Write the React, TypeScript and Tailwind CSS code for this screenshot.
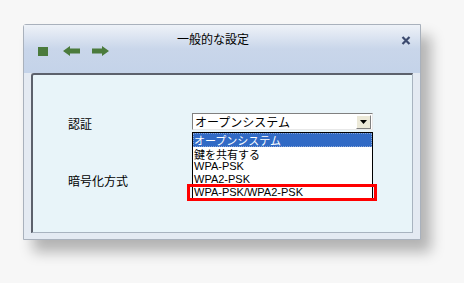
import React from 'react';

const jp = { fontFamily: '"Noto Sans CJK JP", "DejaVu Sans", sans-serif' };
const latin = { fontFamily: '"Liberation Sans", "Noto Sans CJK JP", sans-serif' };

const options = ['オープンシステム', '鍵を共有する', 'WPA-PSK', 'WPA2-PSK', 'WPA-PSK/WPA2-PSK'];
const rowH = ['h-[14px]', 'h-[13px]', 'h-[12px]', 'h-[13px]', 'h-[13px]'];

const ArrowIcon = ({ dir }: { dir: 'left' | 'right' }) => (
  <svg width="17" height="10" viewBox="0 0 17 10">
    {dir === 'left' ? (
      <polygon points="0,5 7,0 7,2.5 17,2.5 17,7.5 7,7.5 7,10" fill="#4b7b3c" />
    ) : (
      <polygon points="17,5 10,0 10,2.5 0,2.5 0,7.5 10,7.5 10,10" fill="#4b7b3c" />
    )}
  </svg>
);

const App = () => {
  return (
    <div className="w-[464px] h-[283px] bg-[#f7f7f7] pl-[23px] pt-[24px] overflow-hidden">
      <div className="w-[398px] h-[216px] flex flex-col bg-[#e4eaf2] border border-[#a9b1bc] rounded-tl-[3px] shadow-[10px_12px_14px_rgba(0,0,0,0.28)]">
        {/* header */}
        <div className="h-[48px] flex items-start bg-gradient-to-b from-[#eef2f8] via-[#c9d6ea] to-[#c4d3e9]">
          <div className="flex items-center mt-[21px] ml-[14px]">
            <div className="w-[10px] h-[9px] bg-[#4b7b3c]" />
            <div className="ml-[15px]"><ArrowIcon dir="left" /></div>
            <div className="ml-[12px]"><ArrowIcon dir="right" /></div>
          </div>
          <div className="ml-[68px] mt-[7px] text-[12px] leading-[14px] text-black" style={jp}>
            一般的な設定
          </div>
          <div className="ml-auto mr-[9px] mt-[11px]">
            <svg width="10" height="9" viewBox="0 0 10 9">
              <path d="M1.5 1 L8.5 8 M8.5 1 L1.5 8" stroke="#3c4a6e" strokeWidth="2.2" />
            </svg>
          </div>
        </div>

        {/* panel */}
        <div className="mx-[7px] h-[160px] bg-[#e8f4f9] border-t-2 border-l-2 border-t-[#5c616c] border-l-[#5c616c] border-r border-b border-r-[#a8b3bf] border-b-[#a8b3bf] rounded-tl-[3px] flex pt-[38px] pl-[35px]">
          <div className="w-[124px] flex flex-col text-[12px] text-black" style={jp}>
            <div className="leading-[17px] mt-[2px]">認証</div>
            <div className="leading-[17px] mt-[40px]">暗号化方式</div>
          </div>
          <div className="w-[181px] flex flex-col">
            <div className="h-[17px] flex items-center bg-white border-t border-l border-t-[#808080] border-l-[#808080] border-r border-b border-r-[#e8e8e8] border-b-[#e8e8e8] pl-[2px] pr-[1px]">
              <span className="text-[12px] leading-[14px] text-black" style={jp}>オープンシステム</span>
              <div className="ml-auto w-[15px] h-[14px] bg-[#ece9d8] border border-t-white border-l-white border-r-[#808080] border-b-[#808080] flex items-center justify-center">
                <svg width="7" height="4" viewBox="0 0 7 4">
                  <polygon points="0,0 7,0 3.5,4" fill="#000" />
                </svg>
              </div>
            </div>
            <div className="relative mt-[2px] bg-white border border-black">
              {options.map((o, i) => (
                <div
                  key={o}
                  className={
                    (i === 0
                      ? 'bg-[#316ac5] text-white outline-1 outline-dotted outline-[#8aa6d6] -outline-offset-1 '
                      : 'text-black ') +
                    rowH[i] +
                    ' flex items-center pl-[1px] text-[11px] leading-[12px] overflow-hidden'
                  }
                  style={/[A-Z]/.test(o) ? latin : jp}
                >
                  {o}
                </div>
              ))}
              <div className="absolute left-[-6px] right-[-5px] bottom-[-3px] h-[17px] border-[3px] border-[#ff0000]" />
            </div>
          </div>
        </div>
      </div>
    </div>
  );
};

export default App;
